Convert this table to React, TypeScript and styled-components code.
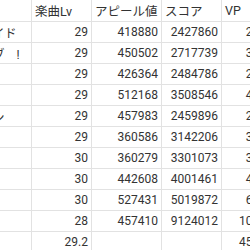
import React from "react";
import styled, { createGlobalStyle } from "styled-components";

// the sheet is scrolled sideways: only the tail of the title column shows
const SCROLL_X = 59;
const COLUMNS = `${SCROLL_X + 32}px 60px 70px 60px 48px`;

interface Song {
  title: string;
  level: number;
  appeal: number;
  score: number;
  vp: number;
}

const songs: Song[] = [
  { title: "アンドロイド", level: 29, appeal: 418880, score: 2427860, vp: 298 },
  { title: "ピースラブ　!", level: 29, appeal: 450502, score: 2717739, vp: 312 },
  { title: "ロキ", level: 29, appeal: 426364, score: 2484786, vp: 289 },
  { title: "テオ", level: 29, appeal: 512168, score: 3508546, vp: 487 },
  { title: "エイリアン", level: 29, appeal: 457983, score: 2459896, vp: 291 },
  { title: "ヒバナ", level: 29, appeal: 360586, score: 3142206, vp: 330 },
  { title: "ロウワー", level: 30, appeal: 360279, score: 3301073, vp: 340 },
  { title: "キラー", level: 30, appeal: 442608, score: 4001461, vp: 496 },
  { title: "シネマ", level: 30, appeal: 527431, score: 5019872, vp: 689 },
  { title: "ニア", level: 28, appeal: 457410, score: 9124012, vp: 1002 },
];

const GlobalStyle = createGlobalStyle`
  body {
    margin: 0;
    background: #fff;
    font-family: Roboto, "Noto Sans CJK JP", sans-serif;
    color: #333;
  }
`;

const Viewport = styled.div`
  width: 250px;
  height: 250px;
  overflow: hidden;
  background: #fff;
`;

const Sheet = styled.div`
  margin-left: -${SCROLL_X}px;
  width: max-content;
`;

const Row = styled.div<{ $header?: boolean }>`
  display: grid;
  grid-template-columns: ${COLUMNS};
  height: ${({ $header }) => ($header ? 22 : 21)}px;
  font-size: ${({ $header }) => ($header ? 12.5 : 12)}px;
`;

const Cell = styled.div<{ $align?: "left" | "right" }>`
  box-sizing: border-box;
  display: flex;
  align-items: center;
  justify-content: ${({ $align }) => ($align === "right" ? "flex-end" : "flex-start")};
  padding: 0 3px;
  border-right: 1px solid #e2e2e2;
  border-bottom: 1px solid #e2e2e2;
  white-space: nowrap;
  overflow: hidden;
`;

const TitleCell = styled(Cell)`
  padding-left: 4px;
`;

export default function App() {
  const avgLevel = songs.reduce((s, x) => s + x.level, 0) / songs.length;
  const totalVp = songs.reduce((s, x) => s + x.vp, 0);

  return (
    <Viewport>
      <GlobalStyle />
      <Sheet>
        <Row $header>
          <TitleCell>曲名</TitleCell>
          <Cell>楽曲Lv</Cell>
          <Cell>アピール値</Cell>
          <Cell>スコア</Cell>
          <Cell>VP</Cell>
        </Row>
        {songs.map((song) => (
          <Row key={song.title}>
            <TitleCell>{song.title}</TitleCell>
            <Cell $align="right">{song.level}</Cell>
            <Cell $align="right">{song.appeal}</Cell>
            <Cell $align="right">{song.score}</Cell>
            <Cell $align="right">{song.vp}</Cell>
          </Row>
        ))}
        <Row>
          <TitleCell />
          <Cell $align="right">{avgLevel.toFixed(1)}</Cell>
          <Cell />
          <Cell />
          <Cell $align="right">{totalVp}</Cell>
        </Row>
      </Sheet>
    </Viewport>
  );
}
